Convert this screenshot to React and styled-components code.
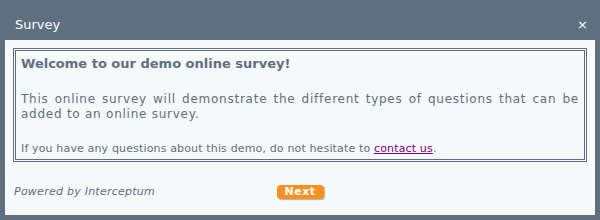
import styled, { createGlobalStyle } from "styled-components";

const Global = createGlobalStyle`
  html, body {
    margin: 0;
    padding: 0;
    background: #5e707f;
  }
  body {
    font-family: "DejaVu Sans", Verdana, sans-serif;
  }
`;

const Window = styled.div`
  width: 600px;
  height: 220px;
  box-sizing: border-box;
  padding: 0 5px 5px;
  display: flex;
  flex-direction: column;
  background: #5e707f;
`;

const TitleBar = styled.div`
  height: 40px;
  display: flex;
  align-items: center;
  justify-content: space-between;
  padding: 9px 7px 0 10px;
  box-sizing: border-box;
  color: #ffffff;
  font-size: 13px;
`;

const Close = styled.span`
  font-size: 13px;
  line-height: 1;
  cursor: pointer;
`;

const Panel = styled.div`
  flex: 1;
  background: #f6f8fa;
  padding: 8px 8px 0;
  display: flex;
  flex-direction: column;
`;

const Box = styled.div`
  border: 3px double #5e707f;
  padding: 5px 5px 3px;
  color: #5e707f;
`;

const Heading = styled.h1`
  margin: 0 0 20px;
  font-size: 13px;
  font-weight: bold;
  line-height: 16px;
`;

const Intro = styled.p`
  margin: 0 0 20px;
  font-size: 12px;
  line-height: 15px;
  text-align: justify;
  letter-spacing: 0.75px;
`;

const Note = styled.p`
  margin: 0;
  font-size: 11px;
  line-height: 14px;
  letter-spacing: 0.15px;
`;

const Link = styled.a`
  color: #800080;
  text-decoration: underline;
  cursor: pointer;
`;

const Footer = styled.div`
  flex: 1;
  display: grid;
  grid-template-columns: 1fr auto 1fr;
  align-items: center;
  padding: 6px 1px 0;
`;

const Powered = styled.span`
  font-size: 11px;
  font-style: italic;
  letter-spacing: 0.25px;
  color: #5e707f;
`;

const Button = styled.button`
  width: 47px;
  height: 14px;
  padding: 0;
  border: none;
  border-radius: 4px;
  background: #f7911f;
  color: #ffffff;
  font-family: "DejaVu Sans", Verdana, sans-serif;
  font-size: 11px;
  font-weight: bold;
  line-height: 14px;
  letter-spacing: 0.5px;
  box-shadow: 1px 1px 1px rgba(90, 90, 90, 0.45);
  cursor: pointer;
`;

const App = () => {
  return (
    <>
      <Global />
      <Window>
        <TitleBar>
          <span>Survey</span>
          <Close>×</Close>
        </TitleBar>
        <Panel>
          <Box>
            <Heading>Welcome to our demo online survey!</Heading>
            <Intro>
              This online survey will demonstrate the different types of questions that can be
              added to an online survey.
            </Intro>
            <Note>
              If you have any questions about this demo, do not hesitate to <Link>contact us</Link>.
            </Note>
          </Box>
          <Footer>
            <Powered>Powered by Interceptum</Powered>
            <Button>Next</Button>
            <span />
          </Footer>
        </Panel>
      </Window>
    </>
  );
};

export default App;
